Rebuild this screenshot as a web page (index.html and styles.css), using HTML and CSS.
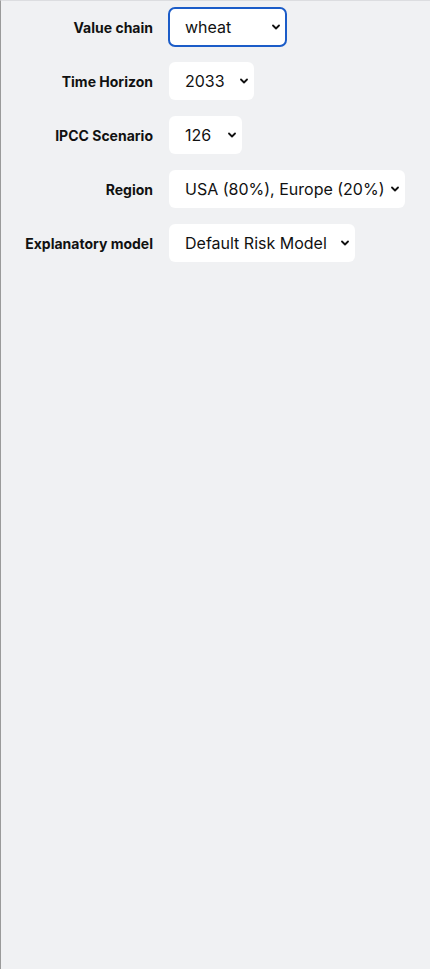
FILE: index.html
```html
<!DOCTYPE html>
<html lang="en">
<head>
  <meta charset="UTF-8" />
  <meta name="viewport" content="width=device-width, initial-scale=1" />
  <title>Risk settings</title>
  <link rel="stylesheet" href="styles.css">
</head>
<body>
  <div class="panel">
    <form class="settings">
      <label class="field-label" for="chain">Value chain</label>
      <div class="field">
        <select id="chain" class="picker picker-chain is-focused">
          <option>wheat</option>
        </select>
      </div>

      <label class="field-label" for="horizon">Time Horizon</label>
      <div class="field">
        <select id="horizon" class="picker picker-horizon">
          <option>2033</option>
        </select>
      </div>

      <label class="field-label" for="scenario">IPCC Scenario</label>
      <div class="field">
        <select id="scenario" class="picker picker-scenario">
          <option>126</option>
        </select>
      </div>

      <label class="field-label" for="region">Region</label>
      <div class="field">
        <select id="region" class="picker picker-region">
          <option>USA (80%), Europe (20%)</option>
        </select>
      </div>

      <label class="field-label" for="model">Explanatory model</label>
      <div class="field">
        <select id="model" class="picker picker-model">
          <option>Default Risk Model</option>
        </select>
      </div>
    </form>
  </div>
</body>
</html>
```

FILE: styles.css
```css
html, body {
  height: 100%;
  margin: 0;
  padding: 0;
  background-color: #ffffff;
  font-family: Inter, "Noto Sans", "Liberation Sans", sans-serif;
  color: #111;
}

.panel {
  box-sizing: border-box;
  height: 100%;
  width: 430px;
  background-color: #f0f1f3;
  border-top: 1px solid #dcdde0;
  border-left: 1px solid #9a9a9a;
  padding-top: 7px;
}

.settings {
  display: grid;
  grid-template-columns: 152px auto;
  column-gap: 16px;
  row-gap: 16px;
  align-items: center;
  justify-items: start;
}

.field-label {
  justify-self: end;
  font-size: 14px;
  font-weight: 700;
  color: #111;
}

.picker {
  appearance: none;
  -webkit-appearance: none;
  box-sizing: border-box;
  height: 38px;
  padding: 0 12px 0 16px;
  border: none;
  border-radius: 6px;
  background-color: #fff;
  background-image: url("data:image/svg+xml;utf8,<svg xmlns='http://www.w3.org/2000/svg' width='8' height='6' viewBox='0 0 8 6'><path d='M1 1.5 L4 4.5 L7 1.5' fill='none' stroke='%23111' stroke-width='1.8' stroke-linecap='round' stroke-linejoin='round'/></svg>");
  background-repeat: no-repeat;
  background-position: right 6px center;
  background-size: 8px 6px;
  font-family: inherit;
  font-size: 16px;
  color: #111;
  display: block;
}

.picker.is-focused {
  outline: 2px solid #1b5cc8;
  outline-offset: -1px;
}

.picker-chain { width: 117px; }
.picker-horizon { width: 85px; }
.picker-scenario { width: 73px; }
.picker-region { width: 236px; }
.picker-model { width: 186px; }
```
